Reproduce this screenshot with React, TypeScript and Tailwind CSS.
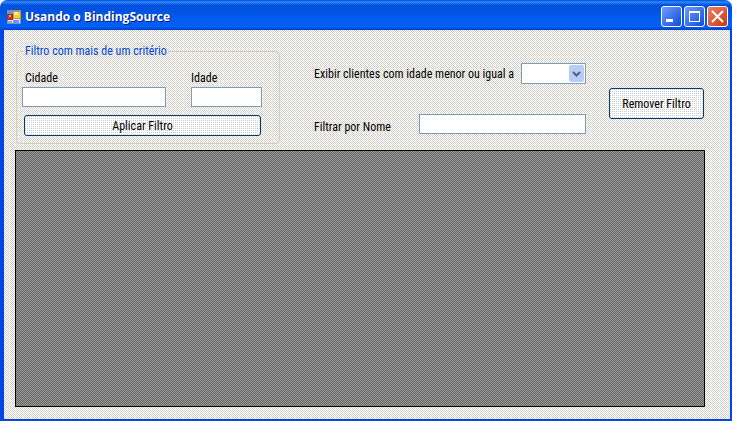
import type { ReactNode } from "react";

const face =
  "bg-[conic-gradient(#fff_25%,transparent_0_50%,#fff_0_75%,transparent_0),conic-gradient(#ccc_25%,#e8e2c8_0_50%,#ccc_0_75%,#d2ceca_0)] bg-[size:2px_2px,4px_4px]";
const buttonFace =
  "bg-[conic-gradient(#fff_75%,#ccc_0)] bg-[size:2px_2px] bg-white rounded-[3px] border border-[#003c74] text-center";
const field = "h-5 border border-[#7f9db9] bg-white px-1 outline-none";

function Caption({ label, tone, children }: { label: string; tone: string; children: ReactNode }) {
  return (
    <button
      type="button"
      aria-label={label}
      className={"flex size-[21px] items-center justify-center rounded-[3px] border border-white " + tone}
    >
      <svg width="19" height="19" viewBox="0 0 19 19" shapeRendering="crispEdges">
        {children}
      </svg>
    </button>
  );
}

function AppIcon() {
  return (
    <svg width="14" height="14" viewBox="0 0 14 14" shapeRendering="crispEdges" aria-hidden="true">
      <path d="M0 0h14v14H0z" fill="#dde4ee" />
      <path d="M0 0h14v1H0zM0 13h14v1H0zM0 0h1v14H0zM13 0h1v14h-1z" fill="#8093b0" />
      <path d="M1 1h5v3H1z" fill="#6699cc" />
      <path d="M0 4h6v6H0z" fill="#993333" />
      <path d="M1 5h4v4H1z" fill="#cc3322" />
      <path d="M2 5h2v2H2z" fill="#ff9980" />
      <path d="M6 1h8v8H6z" fill="#cc9933" />
      <path d="M7 2h6v6H7z" fill="#ffcc33" />
      <path d="M7 2h4v3H7z" fill="#ffee99" />
      <path d="M6 10h6v3H6z" fill="#6699ff" />
      <path d="M1 11h4v2H1z" fill="#99aacc" />
    </svg>
  );
}

export default function App() {
  return (
    <div className="flex min-h-screen flex-col bg-white font-['Roboto_Condensed','DejaVu_Sans_Condensed',sans-serif] text-[12px] leading-[14px] text-black">
      <header className="flex h-[30px] shrink-0 items-center gap-1 rounded-t-[7px] bg-[conic-gradient(rgba(0,30,160,0.22)_25%,transparent_0_50%,rgba(0,30,160,0.22)_0_75%,transparent_0),linear-gradient(#0050e0_0px,#3c96ff_2px,#2080ff_3px,#0058e8_5px,#0058e6_10px,#0066ff_22px,#0066ff_27px,#0044cc_30px)] bg-[size:2px_2px,100%_100%] pt-[3px] pr-1 pl-[7px]">
        <AppIcon />
        <h1 className="flex-1 font-['Open_Sans','Noto_Sans',sans-serif] text-[12px] leading-[18px] font-bold text-white [text-shadow:1px_1px_0_#0a1883]">
          Usando o BindingSource
        </h1>
        <div className="flex gap-[2px]">
          <Caption label="Minimizar" tone="bg-linear-to-br from-[#6f9cff] to-[#1247d8]">
            <path d="M4 12h7v3H4z" fill="#fff" />
          </Caption>
          <Caption label="Maximizar" tone="bg-linear-to-br from-[#6f9cff] to-[#1247d8]">
            <path d="M4 4h11v11H4zM5 6v8h9V6z" fill="#fff" fillRule="evenodd" />
          </Caption>
          <Caption label="Fechar" tone="bg-linear-to-br from-[#f08060] to-[#cc3300]">
            <path d="M4 4l11 11M15 4l-11 11" stroke="#fff" strokeWidth="2" shapeRendering="auto" />
          </Caption>
        </div>
      </header>

      <main className={"flex flex-1 flex-col border-r-2 border-b-2 border-l-4 border-[#0048e0] pt-[14px] pr-[25px] pb-3 pl-[11px] " + face}>
        <div className="flex items-start">
          <fieldset className="ml-px w-[264px] rounded-[4px] border border-[#d0d0bf] pr-[17px] pb-[7px] pl-[5px]">
            <legend className={"ml-[2px] px-px text-[#0046d5] " + face}>Filtro com mais de um critério</legend>
            <div className="flex gap-[25px] pt-[13px]">
              <div className="flex flex-1 flex-col gap-[2px]">
                <label htmlFor="cidade" className="pl-[3px]">Cidade</label>
                <input id="cidade" type="text" className={"w-full " + field} />
              </div>
              <div className="flex w-[71px] flex-col gap-[2px]">
                <label htmlFor="idade">Idade</label>
                <input id="idade" type="text" className={"w-full " + field} />
              </div>
            </div>
            <div className="pt-2 pr-px pl-[2px]">
              <button type="button" className={"h-[21px] w-full " + buttonFace}>Aplicar Filtro</button>
            </div>
          </fieldset>

          <div className="ml-[34px] flex w-[272px] flex-col gap-[30px] pt-[19px]">
            <div className="flex items-center justify-between">
              <label htmlFor="idade-max" className="whitespace-nowrap">Exibir clientes com idade menor ou igual a</label>
              <span className="relative">
                <select id="idade-max" className="block h-[21px] w-[65px] appearance-none border border-[#7f9db9] bg-white px-1 outline-none">
                  <option value=""></option>
                </select>
                <svg className="pointer-events-none absolute top-[2px] right-[2px]" width="15" height="17" viewBox="0 0 15 17" aria-hidden="true">
                  <rect width="15" height="17" rx="2" fill="#b9ccf8" />
                  <path d="M4 7l3.5 3.5L11 7" fill="none" stroke="#4d6185" strokeWidth="2" />
                </svg>
              </span>
            </div>
            <div className="flex items-end justify-between">
              <label htmlFor="nome">Filtrar por Nome</label>
              <input id="nome" type="text" className={"w-[167px] " + field} />
            </div>
          </div>

          <button type="button" className={"mt-11 mr-px ml-auto h-[31px] w-[95px] " + buttonFace}>Remover Filtro</button>
        </div>

        <section
          aria-label="Clientes"
          className="mt-[6px] flex-1 border border-black bg-[conic-gradient(#999_25%,#666_0_50%,#999_0_75%,#666_0)] bg-[size:2px_2px]"
        />
      </main>
    </div>
  );
}
